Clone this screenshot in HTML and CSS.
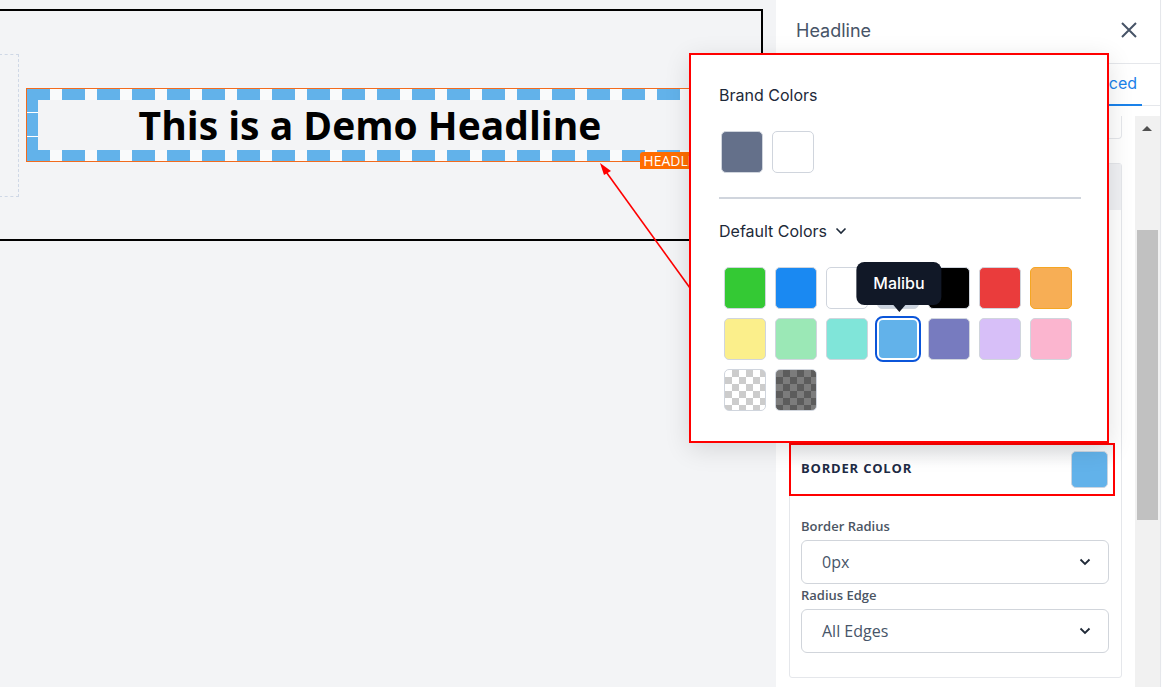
FILE: index.html
```html
<!DOCTYPE html>
<html lang="en">
<head>
    <meta charset="UTF-8">
    <title>Headline - Border Color</title>
    <link rel="stylesheet" href="styles.css">
</head>
<body>
<div class="editor">
    <div class="canvas">
        <div class="frame">
            <div class="column-slot"></div>
            <div class="headline-block">
                <h2 class="headline">This is a Demo Headline</h2>
                <span class="block-label">HEADLINE</span>
            </div>
        </div>
        <!-- annotation arrow from the picker to the headline border -->
        <svg class="pointer" width="100" height="140" viewBox="0 0 100 140">
            <line x1="92" y1="129" x2="6" y2="10" stroke="#f00" stroke-width="1.6"/>
            <polygon points="2,4 13,12 6,16" fill="#f00"/>
        </svg>
    </div>

    <aside class="panel">
        <div class="panel-head">
            <span class="panel-title">Headline</span>
            <svg class="close" width="16" height="16" viewBox="0 0 16 16">
                <path d="M1 1 L15 15 M15 1 L1 15" stroke="#475467" stroke-width="2" fill="none"/>
            </svg>
        </div>
        <div class="tabs">
            <span class="tab active">Advanced</span>
        </div>
        <div class="panel-body">
            <div class="panel-scroll">
                <div class="field-stub"></div>
                <div class="card">
                    <div class="card-head"></div>
                    <!-- rows under the colour picker -->
                    <div class="card-hidden"></div>
                    <div class="color-row">
                        <span class="row-title">BORDER COLOR</span>
                        <span class="color-chip"></span>
                    </div>
                    <div class="fields">
                        <label class="field-label">Border Radius</label>
                        <div class="select">
                            <span>0px</span>
                            <svg width="12" height="8" viewBox="0 0 12 8"><path d="M1.5 1.5 L6 6 L10.5 1.5" stroke="#1f2937" stroke-width="1.8" fill="none"/></svg>
                        </div>
                        <label class="field-label second">Radius Edge</label>
                        <div class="select">
                            <span>All Edges</span>
                            <svg width="12" height="8" viewBox="0 0 12 8"><path d="M1.5 1.5 L6 6 L10.5 1.5" stroke="#1f2937" stroke-width="1.8" fill="none"/></svg>
                        </div>
                    </div>
                </div>
            </div>
            <div class="scrollbar">
                <span class="scroll-arrow"></span>
                <span class="scroll-thumb"></span>
            </div>
        </div>
    </aside>

    <div class="picker">
        <div class="picker-title">Brand Colors</div>
        <div class="brand-swatches">
            <span class="swatch" style="background:#64708a"></span>
            <span class="swatch" style="background:#fff"></span>
        </div>
        <div class="picker-divider"></div>
        <div class="picker-title">
            Default Colors
            <svg width="12" height="8" viewBox="0 0 12 8"><path d="M1.5 1.5 L6 6 L10.5 1.5" stroke="#1d2939" stroke-width="1.6" fill="none"/></svg>
        </div>
        <div class="swatch-grid">
            <span class="swatch" style="background:#34c934"></span>
            <span class="swatch" style="background:#1a89f2"></span>
            <span class="swatch" style="background:#fff"></span>
            <span class="swatch" style="background:#cbd3df"></span>
            <span class="swatch" style="background:#000"></span>
            <span class="swatch" style="background:#ea3c3c"></span>
            <span class="swatch" style="background:#f7ae55;border-color:#f5a623"></span>
            <span class="swatch" style="background:#fbef8b"></span>
            <span class="swatch" style="background:#9be8b6"></span>
            <span class="swatch" style="background:#80e5d9"></span>
            <span class="swatch selected" style="background:#62b2ea">
                <span class="tip">Malibu</span>
            </span>
            <span class="swatch" style="background:#777bbf"></span>
            <span class="swatch" style="background:#d7bff8"></span>
            <span class="swatch" style="background:#fbb5cf"></span>
            <span class="swatch checker-light"></span>
            <span class="swatch checker-dark"></span>
        </div>
    </div>
</div>
</body>
</html>
```

FILE: styles.css
```css
body {
    margin: 0;
    background-color: white;
    font-family: Inter, "Open Sans", sans-serif;
    overflow: hidden;
}

.editor {
    display: flex;
    width: 1162px;
    height: 687px;
    position: relative;
}

/* ---- canvas ---- */

.canvas {
    flex: none;
    width: 776px;
    background-color: #f3f4f6;
    padding-top: 9px;
    box-sizing: border-box;
    position: relative;
}

.frame {
    width: 763px;
    height: 232px;
    box-sizing: border-box;
    border: 2px solid black;
    border-left: none;
    display: flex;
    align-items: center;
}

.column-slot {
    width: 20px;
    height: 143px;
    margin-left: -1px;
    border: 1px dashed #cfd8e6;
    box-sizing: border-box;
}

/* dashed border drawn with gradients so the dash length matches the builder */
.headline-block {
    position: relative;
    margin-left: 8px;
    width: 686px;
    border: 11px solid transparent;
    outline: 1px solid #f26b1d;
    box-sizing: border-box;
    background:
        repeating-linear-gradient(90deg, #62b2ea 0 23px, #f9fafb 23px 35px) top left / 100% 11px no-repeat,
        repeating-linear-gradient(90deg, #62b2ea 0 23px, #f9fafb 23px 35px) bottom left / 100% 11px no-repeat,
        repeating-linear-gradient(180deg, #62b2ea 0 23px, #fff 23px 24px) top left / 11px 100% no-repeat,
        repeating-linear-gradient(180deg, #62b2ea 0 23px, #fff 23px 24px) top right / 11px 100% no-repeat;
    background-origin: border-box;
    background-clip: border-box;
}

.headline {
    margin: 0;
    font-family: "Open Sans", sans-serif;
    font-weight: 700;
    font-size: 39px;
    line-height: 50px;
    text-align: center;
    color: black;
}

.block-label {
    position: absolute;
    right: -11px;
    bottom: -19px;
    padding: 0 3px;
    background-color: #ff6d00;
    color: white;
    font-family: "Open Sans", sans-serif;
    font-size: 14px;
    line-height: 17px;
    border-radius: 3px 0 0 0;
}

.pointer {
    position: absolute;
    left: 598px;
    top: 159px;
}

/* ---- side panel ---- */

.panel {
    flex: none;
    width: 384px;
    border-right: 1px solid #e5e7eb;
    background-color: white;
    box-shadow: -7px 0 14px rgba(0, 0, 0, 0.05);
    display: flex;
    flex-direction: column;
}

.panel-head {
    height: 64px;
    flex: none;
    box-sizing: border-box;
    border-bottom: 1px solid #e5e7eb;
    display: flex;
    align-items: center;
    justify-content: space-between;
    padding: 0 23px 3px 20px;
}

.panel-title {
    font-size: 18px;
    color: #475467;
}

.tabs {
    height: 42px;
    flex: none;
    box-sizing: border-box;
    border-bottom: 1px solid #e5e7eb;
    display: flex;
    justify-content: flex-end;
    padding-right: 18px;
}

.tab {
    display: flex;
    align-items: center;
    padding: 0 5px 2px;
    font-size: 16px;
    color: #1a82ea;
    margin-bottom: -1px;
}

.tab.active {
    border-bottom: 2px solid #1a82ea;
}

.panel-body {
    flex: 1;
    display: flex;
    padding-top: 10px;
    min-height: 0;
}

.panel-scroll {
    flex: 1;
    padding: 0 13px;
}

.field-stub {
    height: 22px;
    border: 1px solid #e5e7eb;
    border-top: none;
    border-radius: 0 0 4px 4px;
    margin-bottom: 24px;
}

.card {
    border: 1px solid #e5e7eb;
    border-radius: 3px;
}

.card-head {
    height: 46px;
    background-color: #f0f1f4;
}

.card-hidden {
    height: 233px;
}

.color-row {
    height: 53px;
    box-sizing: border-box;
    margin: 0 6px 0 -1px;
    border: 2px solid #f00;
    display: flex;
    align-items: center;
    justify-content: space-between;
    padding: 0 5px 4px 10px;
    background: linear-gradient(#eeeff1, #fff 45%);
}

.row-title {
    font-family: "Open Sans", sans-serif;
    font-weight: 700;
    font-size: 13px;
    letter-spacing: 0.8px;
    color: #1e2b45;
}

.color-chip {
    width: 37px;
    height: 37px;
    box-sizing: border-box;
    margin-top: 4px;
    border-radius: 5px;
    border: 1px solid #cbd5e1;
    background-color: #62b2ea;
}

.fields {
    padding: 21px 12px 24px 11px;
    font-family: "Open Sans", sans-serif;
}

.field-label {
    display: block;
    font-size: 13px;
    line-height: 18px;
    font-weight: 600;
    color: #4b5563;
    margin-bottom: 5px;
}

.field-label.second {
    margin-top: 2px;
}

.select {
    height: 44px;
    box-sizing: border-box;
    border: 1px solid #d1d5db;
    border-radius: 6px;
    display: flex;
    align-items: center;
    justify-content: space-between;
    padding: 0 17px 0 20px;
    font-size: 16px;
    color: #475569;
}

.scrollbar {
    flex: none;
    width: 25px;
    background-color: #f1f1f1;
    position: relative;
}

.scroll-arrow {
    position: absolute;
    left: 7px;
    top: 10px;
    border-left: 5px solid transparent;
    border-right: 5px solid transparent;
    border-bottom: 5px solid #505050;
}

.scroll-thumb {
    position: absolute;
    left: 2px;
    right: 2px;
    top: 114px;
    height: 290px;
    background-color: #c1c1c1;
}

/* ---- colour picker popover ---- */

.picker {
    position: absolute;
    left: 689px;
    top: 53px;
    width: 420px;
    height: 390px;
    box-sizing: border-box;
    border: 2px solid #f00;
    background-color: white;
    box-shadow: 0 6px 24px rgba(0, 0, 0, 0.12);
    padding: 28px 26px 0 28px;
}

.picker-title {
    font-size: 16px;
    line-height: 24px;
    color: #1d2939;
    display: flex;
    align-items: center;
    gap: 8px;
}

.brand-swatches {
    display: flex;
    gap: 9px;
    margin: 24px 0 24px 2px;
}

.picker-divider {
    height: 2px;
    background-color: #d0d5dd;
    margin-bottom: 20px;
}

.swatch-grid {
    display: grid;
    grid-template-columns: repeat(7, 42px);
    gap: 9px;
    margin: 24px 0 0 5px;
}

.swatch {
    display: block;
    width: 42px;
    height: 42px;
    box-sizing: border-box;
    border: 1px solid #d0d5dd;
    border-radius: 5px;
}

.swatch.selected {
    position: relative;
    border: 2px solid white;
    outline: 2px solid #0b55d9;
    border-radius: 6px;
}

.checker-light {
    background: repeating-conic-gradient(#cccccc 0 25%, #ffffff 0 50%) 0 0 / 14px 14px;
}

.checker-dark {
    background: repeating-conic-gradient(#5c5c5c 0 25%, #7c7c7c 0 50%) 0 0 / 14px 14px;
}

.tip {
    position: absolute;
    left: 50%;
    bottom: 53px;
    transform: translateX(-50%);
    margin-left: 1px;
    background-color: #111827;
    color: white;
    font-size: 16px;
    font-weight: 500;
    line-height: 43px;
    padding: 0 17px;
    border-radius: 8px;
    white-space: nowrap;
}

.tip::after {
    content: "";
    position: absolute;
    left: 50%;
    top: 100%;
    margin-left: -6px;
    border-left: 6px solid transparent;
    border-right: 6px solid transparent;
    border-top: 7px solid #111827;
}
```
